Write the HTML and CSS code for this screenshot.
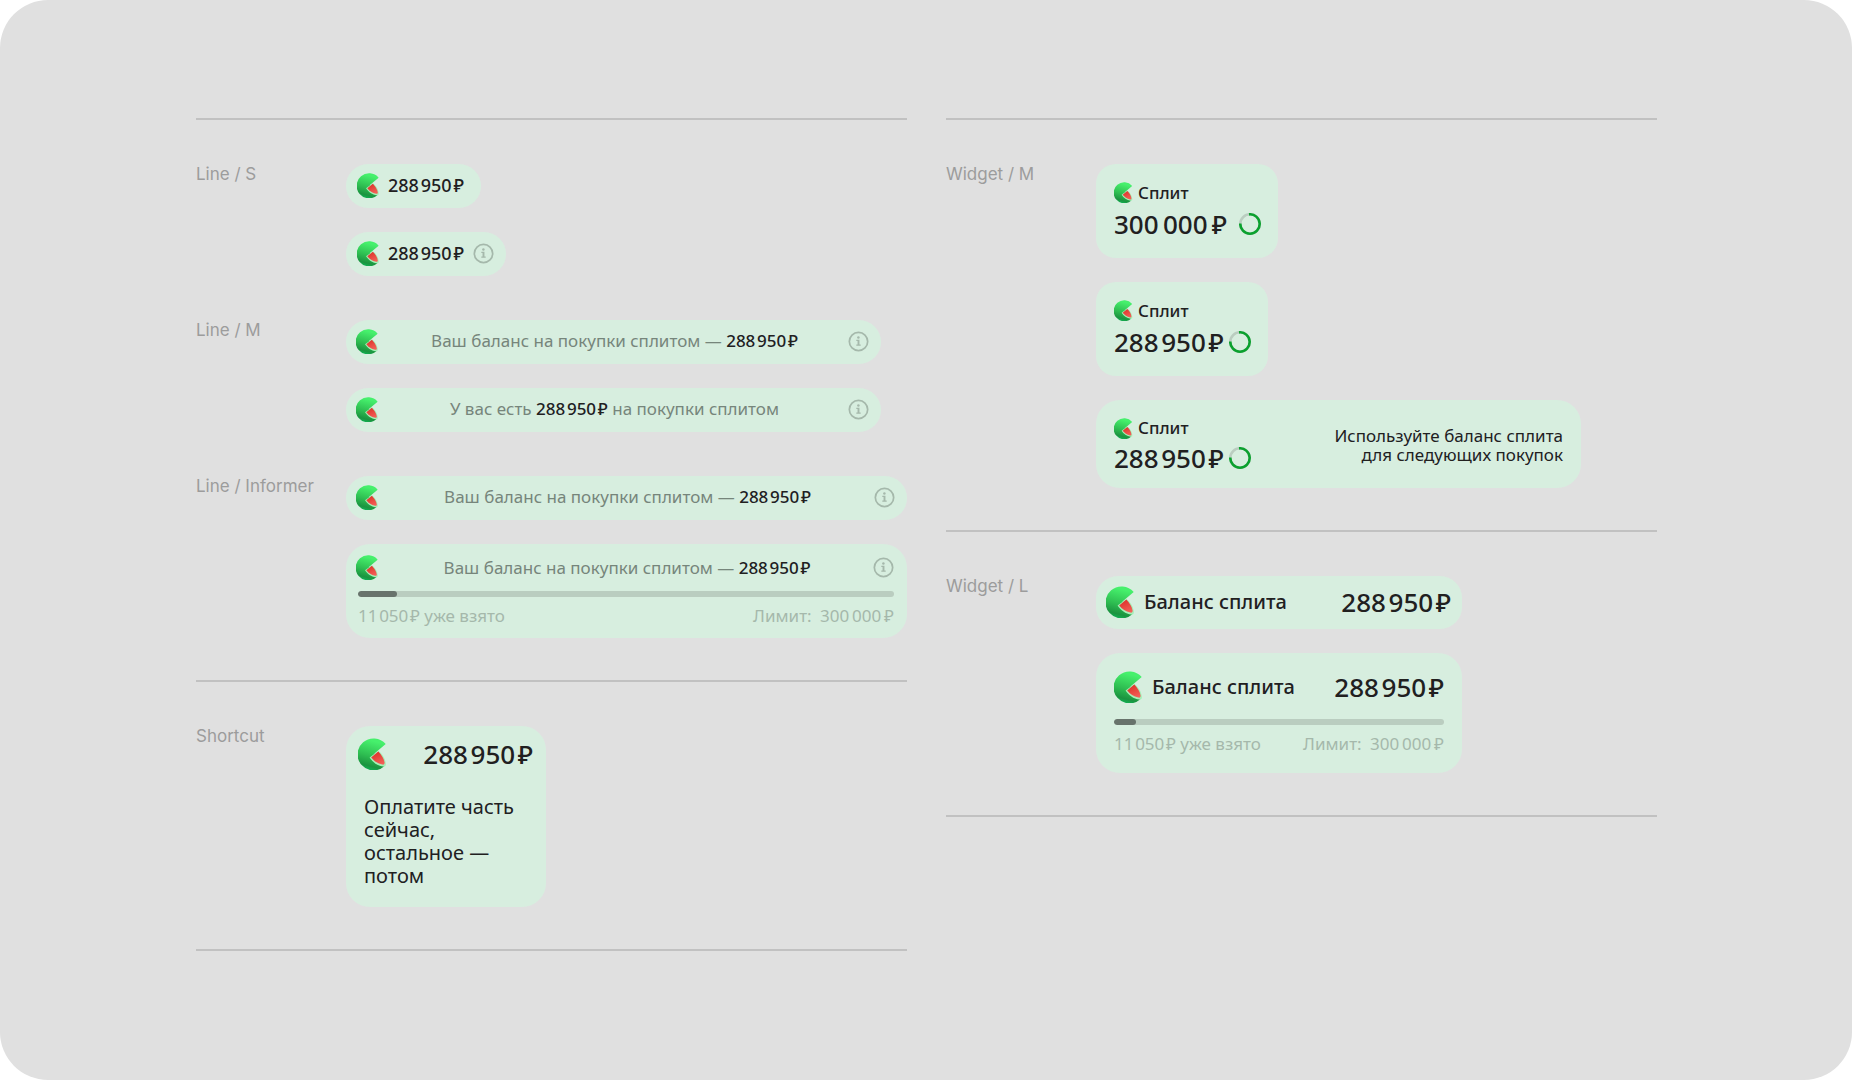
FILE: index.html
```html
<!DOCTYPE html>
<html lang="ru">
<head>
<meta charset="utf-8">
<meta name="viewport" content="width=device-width, initial-scale=1">
<title>Сплит — Баланс</title>
<link rel="stylesheet" href="styles.css">
</head>
<body>
<svg class="sprite" width="0" height="0" aria-hidden="true">
  <defs>
    <linearGradient id="peel" x1="0.62" y1="0.1" x2="0.42" y2="1">
      <stop offset="0" stop-color="#46f06c"/>
      <stop offset="0.5" stop-color="#2fbf52"/>
      <stop offset="0.85" stop-color="#1b9440"/>
      <stop offset="1" stop-color="#10b455"/>
    </linearGradient>
    <linearGradient id="pulp" x1="0.3" y1="0" x2="0.8" y2="1">
      <stop offset="0" stop-color="#dc3229"/>
      <stop offset="1" stop-color="#f4625a"/>
    </linearGradient>
    <symbol id="melon" viewBox="0 0 32 32">
      <path fill="url(#peel)" d="M27.700 6A16 16 0 1 0 26 28.500L20 20L16.500 15.500Z"/>
      <path fill="#a5f0b8" d="M11.600 19.600L20.300 13C24.200 15.600 27.600 20.800 27.900 26.200C27.900 28 26.900 28.800 25.400 28.600C19.600 28 14.600 24.400 11.600 19.600Z"/>
      <path fill="url(#pulp)" d="M13.200 19.600L20.300 13.600C23.400 16.600 25.900 20.600 26.600 24.600C26.700 26.200 25.900 26.900 24.400 26.600C19.600 25.600 16 23.200 13.200 19.600Z"/>
    </symbol>
    <symbol id="info" viewBox="0 0 22 22">
      <circle cx="11" cy="11" r="9.600" fill="none" stroke="currentColor" stroke-width="1.800"/>
      <circle cx="10.900" cy="6.900" r="1.300" fill="currentColor"/>
      <path fill="currentColor" d="M8.700 9.200H12V14.200H13.300V15.400H8.700V14.200H10V10.400H8.700Z"/>
    </symbol>
    <symbol id="ring" viewBox="0 0 22 22">
      <circle cx="11" cy="11" r="9.700" fill="none" stroke="#bacdc0" stroke-width="2.600"/>
      <path fill="none" stroke="#0aa12e" stroke-width="2.600" d="M10 1.350A9.700 9.700 0 1 1 1.300 10.500"/>
    </symbol>
  </defs>
</svg>
<main class="board">
  <div class="column">
    <section class="group">
      <div class="row">
        <h2 class="label">Line / S</h2>
        <div class="samples">
          <div class="pill pill-s"><svg class="logo"><use href="#melon"/></svg><b class="sum">288&#8202;950&#8202;₽</b></div>
          <div class="pill pill-s with-info"><svg class="logo"><use href="#melon"/></svg><b class="sum">288&#8202;950&#8202;₽</b><button class="info" aria-label="Подробнее"><svg><use href="#info"/></svg></button></div>
        </div>
      </div>
      <div class="row">
        <h2 class="label">Line / M</h2>
        <div class="samples">
          <div class="pill pill-m"><svg class="logo"><use href="#melon"/></svg><p class="message">Ваш баланс на покупки сплитом — <b class="sum">288&#8202;950&#8202;₽</b></p><button class="info" aria-label="Подробнее"><svg><use href="#info"/></svg></button></div>
          <div class="pill pill-m"><svg class="logo"><use href="#melon"/></svg><p class="message">У вас есть <b class="sum">288&#8202;950&#8202;₽</b> на покупки сплитом</p><button class="info" aria-label="Подробнее"><svg><use href="#info"/></svg></button></div>
        </div>
      </div>
      <div class="row">
        <h2 class="label">Line / Informer</h2>
        <div class="samples">
          <div class="pill pill-wide"><svg class="logo"><use href="#melon"/></svg><p class="message">Ваш баланс на покупки сплитом — <b class="sum">288&#8202;950&#8202;₽</b></p><button class="info" aria-label="Подробнее"><svg><use href="#info"/></svg></button></div>
          <div class="informer">
            <div class="informer-top"><svg class="logo"><use href="#melon"/></svg><p class="message">Ваш баланс на покупки сплитом — <b class="sum">288&#8202;950&#8202;₽</b></p><button class="info" aria-label="Подробнее"><svg><use href="#info"/></svg></button></div>
            <progress class="bar" max="1000" value="73" aria-label="Использовано"></progress>
            <div class="limits"><span>11&#8202;050&#8202;₽ уже взято</span><span>Лимит:&ensp;300&#8201;000&#8201;₽</span></div>
          </div>
        </div>
      </div>
    </section>
    <section class="group">
      <div class="row">
        <h2 class="label">Shortcut</h2>
        <div class="samples">
          <div class="shortcut">
            <div class="shortcut-top"><svg class="logo logo-l"><use href="#melon"/></svg><b class="sum sum-l">288&#8202;950&#8202;₽</b></div>
            <p class="shortcut-text">Оплатите часть сейчас, остальное — потом</p>
          </div>
        </div>
      </div>
    </section>
  </div>
  <div class="column">
    <section class="group">
      <div class="row">
        <h2 class="label">Widget / M</h2>
        <div class="samples">
          <div class="widget widget-full">
            <div class="account"><div class="name"><svg class="logo logo-s"><use href="#melon"/></svg>Сплит</div>
            <div class="amount"><b class="sum sum-l">300&#8201;000&#8201;₽</b><svg class="ring"><use href="#ring"/></svg></div></div>
          </div>
          <div class="widget">
            <div class="account"><div class="name"><svg class="logo logo-s"><use href="#melon"/></svg>Сплит</div>
            <div class="amount"><b class="sum sum-l">288&#8202;950&#8202;₽</b><svg class="ring"><use href="#ring"/></svg></div></div>
          </div>
          <div class="widget widget-wide">
            <div class="account"><div class="name"><svg class="logo logo-s"><use href="#melon"/></svg>Сплит</div>
            <div class="amount"><b class="sum sum-l">288&#8202;950&#8202;₽</b><svg class="ring"><use href="#ring"/></svg></div></div>
            <p class="hint">Используйте баланс сплита<br>для следующих покупок</p>
          </div>
        </div>
      </div>
    </section>
    <section class="group">
      <div class="row">
        <h2 class="label">Widget / L</h2>
        <div class="samples">
          <div class="balance"><svg class="logo logo-l"><use href="#melon"/></svg><span class="balance-name">Баланс сплита</span><b class="sum sum-l">288&#8202;950&#8202;₽</b></div>
          <div class="balance-card">
            <div class="balance-top"><svg class="logo logo-l"><use href="#melon"/></svg><span class="balance-name">Баланс сплита</span><b class="sum sum-l">288&#8202;950&#8202;₽</b></div>
            <progress class="bar" max="1000" value="67" aria-label="Использовано"></progress>
            <div class="limits"><span>11&#8202;050&#8202;₽ уже взято</span><span>Лимит:&ensp;300&#8201;000&#8201;₽</span></div>
          </div>
        </div>
      </div>
    </section>
  </div>
</main>
</body>
</html>
```
FILE: styles.css
```css
:root {
  --card: #d7eedf;
  --ink: #21201f;
  --muted: #a5b8ab;
  --line: #c1c1c1;
}
* { box-sizing: border-box; }
body {
  margin: 0;
  background: #fff;
  color: var(--ink);
  font: 400 17px/20px "Noto Sans", sans-serif;
}
h2, p { margin: 0; }
svg { display: block; }
.sprite { position: absolute; }

.board {
  display: grid;
  grid-template-columns: 1fr 1fr;
  gap: 39px;
  align-items: start;
  min-height: 100vh;
  padding: 118px 195px 40px 196px;
  border-radius: 48px;
  background: #e0e0e0;
}
.column { border-bottom: 2px solid var(--line); }
.group {
  display: flex;
  flex-direction: column;
  gap: 44px;
  padding: 44px 0 42px;
  border-top: 2px solid var(--line);
}
.row {
  display: grid;
  grid-template-columns: 150px 1fr;
}
.label {
  color: #9c9c9c;
  font: 400 17px/20px "Inter", sans-serif;
}
.samples {
  display: flex;
  flex-direction: column;
  align-items: flex-start;
  gap: 24px;
}

.logo { flex: none; width: 25px; height: 25px; }
.logo-s { width: 21px; height: 21px; }
.logo-l { width: 32px; height: 32px; }
.sum { color: var(--ink); font-weight: 500; white-space: nowrap; }
.sum-l { font-size: 26px; line-height: 32px; }
.info {
  flex: none;
  padding: 0;
  border: 0;
  background: none;
  color: var(--muted);
}
.info svg { width: 21px; height: 21px; }
.message {
  flex: 1;
  color: #76857b;
  text-align: center;
}

.pill {
  display: flex;
  align-items: center;
  gap: 7px;
  height: 44px;
  padding: 0 12px 2px 10px;
  border-radius: 22px;
  background: var(--card);
}
.pill-s { gap: 6px; padding: 0 17px 2px 11px; }
.pill-s .sum { font-size: 18px; }
.with-info { padding-right: 12px; }
.with-info .info { padding-left: 3px; }
.pill-m { width: 535px; }
.pill-wide { width: 100%; }

.informer {
  width: 100%;
  padding: 11px 13px 12px 12px;
  border-radius: 24px;
  background: var(--card);
}
.informer-top { display: flex; align-items: center; margin-left: -2px; }
.bar {
  display: block;
  width: 100%;
  height: 6px;
  border: 0;
  border-radius: 3px;
  appearance: none;
  background: #bacdc0;
  overflow: hidden;
}
.bar::-webkit-progress-bar { background: #bacdc0; }
.bar::-webkit-progress-value { border-radius: 3px; background: #68736c; }
.informer .bar { margin: 11px 0 9px; }
.limits {
  display: flex;
  justify-content: space-between;
  color: var(--muted);
  white-space: nowrap;
}

.shortcut {
  width: 200px;
  padding: 12px 13px 20px 12px;
  border-radius: 24px;
  background: var(--card);
}
.shortcut-top { display: flex; align-items: center; justify-content: space-between; }
.shortcut-text {
  padding: 25px 10px 0 6px;
  font-size: 20px;
  line-height: 23px;
}

.widget {
  display: flex;
  align-items: center;
  justify-content: space-between;
  width: 172px;
  min-height: 94px;
  padding: 0 17px 0 18px;
  border-radius: 20px;
  background: var(--card);
}
.widget-full { width: 182px; }
.account { display: flex; flex: 1; flex-direction: column; gap: 5px; }
.name { display: flex; align-items: center; gap: 3px; font-weight: 500; }
.amount { display: flex; align-items: center; justify-content: space-between; }
.ring { width: 22px; height: 22px; }
.widget-wide {
  width: 485px;
  min-height: 88px;
  padding: 3px 18px 0 18px;
  border-radius: 24px;
}
.widget-wide .account { flex: none; width: 137px; gap: 3px; }
.hint { padding-bottom: 2px; line-height: 19px; text-align: right; }

.balance {
  display: flex;
  align-items: center;
  width: 366px;
  height: 53px;
  padding: 0 11px 2px 10px;
  border-radius: 22px;
  background: var(--card);
}
.balance-name { flex: 1; padding-left: 6px; font-size: 20px; line-height: 24px; font-weight: 500; }
.balance-card {
  width: 366px;
  padding: 18px 18px 19px;
  border-radius: 24px;
  background: var(--card);
}
.balance-top { display: flex; align-items: center; }
.balance-card .bar { margin: 16px 0 9px; }
```
